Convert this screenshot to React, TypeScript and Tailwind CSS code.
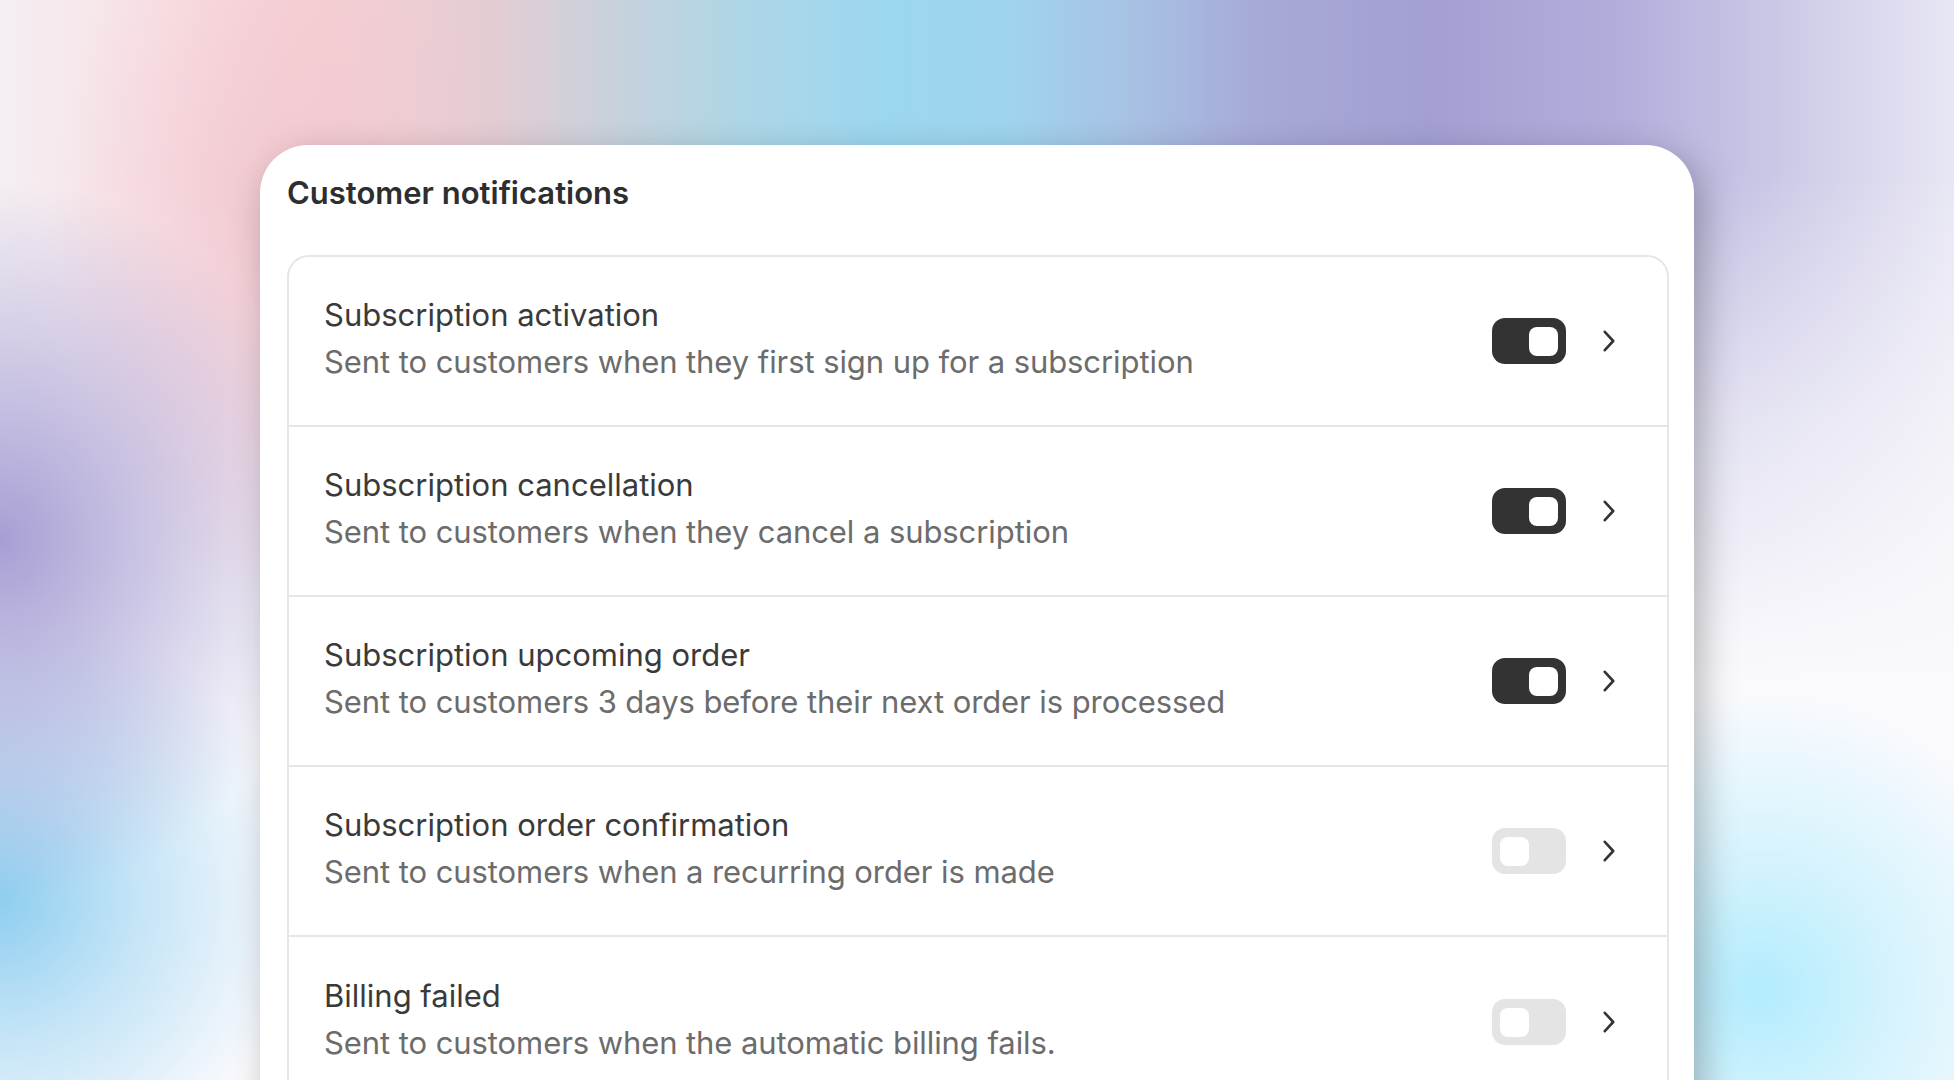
import React from "react";

type Item = { title: string; desc: string; on: boolean };

const items: Item[] = [
  { title: "Subscription activation", desc: "Sent to customers when they first sign up for a subscription", on: true },
  { title: "Subscription cancellation", desc: "Sent to customers when they cancel a subscription", on: true },
  { title: "Subscription upcoming order", desc: "Sent to customers 3 days before their next order is processed", on: true },
  { title: "Subscription order confirmation", desc: "Sent to customers when a recurring order is made", on: false },
  { title: "Billing failed", desc: "Sent to customers when the automatic billing fails.", on: false },
];

function Toggle({ on }: { on: boolean }) {
  return (
    <div
      className={
        on
          ? "flex h-[46px] w-[74px] shrink-0 items-center justify-end rounded-[13px] bg-[#333333] px-[8px]"
          : "flex h-[46px] w-[74px] shrink-0 items-center justify-start rounded-[13px] bg-[#e4e4e4] px-[8px]"
      }
    >
      <div className="h-[29px] w-[29px] rounded-[8px] bg-white" />
    </div>
  );
}

function Chevron() {
  return (
    <svg width="12" height="22" viewBox="0 0 12 22" className="ml-[37px] shrink-0" fill="none">
      <polyline points="1.8,1.8 10.2,11 1.8,20.2" stroke="#333333" strokeWidth="2.6" strokeLinecap="round" strokeLinejoin="round" />
    </svg>
  );
}

export default function App() {
  return (
    <div className="flex h-[1080px] w-full justify-center overflow-hidden bg-[radial-gradient(ellipse_330px_360px_at_0px_540px,#a79fd4_0%,rgba(167,159,212,0.55)_45%,rgba(167,159,212,0)_100%),radial-gradient(ellipse_300px_300px_at_0px_900px,#8ecef0_0%,rgba(142,206,240,0.5)_45%,rgba(142,206,240,0)_100%),radial-gradient(ellipse_300px_300px_at_1760px_990px,#b2ecfd_0%,rgba(178,236,253,0.5)_45%,rgba(178,236,253,0)_100%),radial-gradient(ellipse_220px_380px_at_270px_220px,rgba(240,198,208,0.85)_0%,rgba(240,198,208,0)_100%),linear-gradient(180deg,rgba(249,249,252,0)_170px,rgba(249,249,252,0.6)_420px,rgba(250,250,253,1)_680px),linear-gradient(90deg,#f4eef2_0px,#f9e2e5_170px,#f7d1d4_310px,#e4ccd3_490px,#c6d2dd_620px,#aed6e6_740px,#9cd7ef_880px,#9fd4ee_1010px,#a8c2e4_1130px,#a7a9d8_1260px,#a39fd3_1430px,#b2aedb_1620px,#c8c5e5_1760px,#e8e7f4_1954px)] pt-[145px] font-['Inter',sans-serif]">
      <div className="h-[1200px] w-[1434px] shrink-0 rounded-[48px] bg-white pl-[27px] pr-[25px] pt-[30px] shadow-[8px_12px_36px_rgba(0,0,0,0.28)]">
        <h1 className="text-[31px] font-semibold leading-9 text-[#2e2e2e]">Customer notifications</h1>
        <div className="mt-[44px] rounded-[22px] border-2 border-[#e6e6e6]">
          {items.map((it, i) => (
            <div
              key={i}
              className={
                i < items.length - 1
                  ? "flex h-[170px] items-center border-b-2 border-[#e6e6e6] pl-[35px] pr-[52px]"
                  : "flex h-[170px] items-center pl-[35px] pr-[52px]"
              }
            >
              <div className="flex-1 pb-[7px]">
                <div className="text-[31px] leading-[47px] text-[#3a3a3a]">{it.title}</div>
                <div className="text-[31px] leading-[47px] tracking-[-0.08px] text-[#6c6c6c]">{it.desc}</div>
              </div>
              <Toggle on={it.on} />
              <Chevron />
            </div>
          ))}
        </div>
      </div>
    </div>
  );
}
